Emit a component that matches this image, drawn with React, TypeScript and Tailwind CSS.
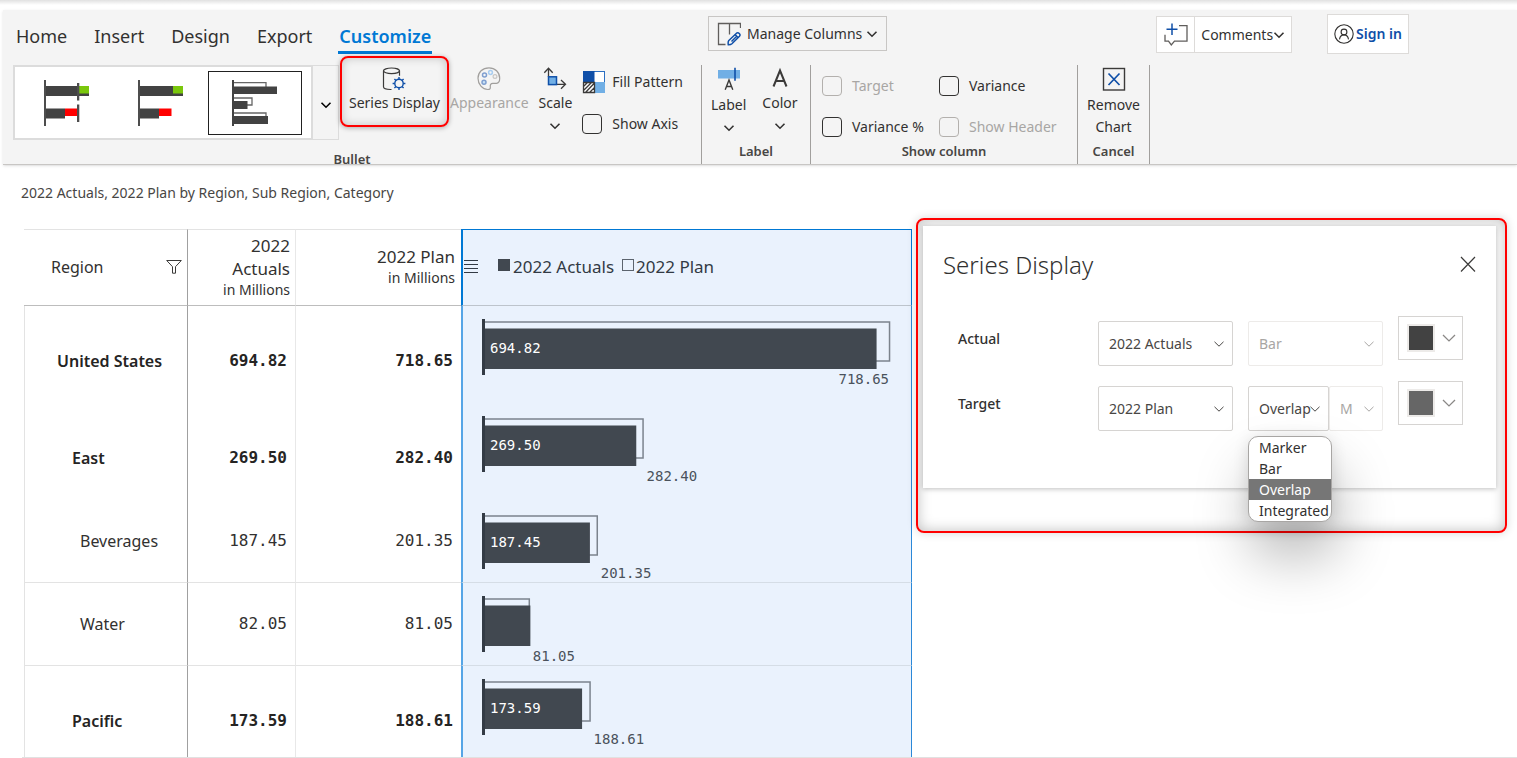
import type { ReactNode } from "react";

const INK = "#3b3a39";
const BLUE = "#0f4fa8";
const SKY = "#71afe5";

const ICON = "h-6 w-6 shrink-0";

function Chevron({ className = "h-3 w-3", thin }: { className?: string; thin?: boolean }) {
  return (
    <svg viewBox="0 0 12 12" className={className} fill="none" stroke="currentColor" strokeWidth={thin ? 1 : 1.6} aria-hidden="true">
      <path d="M1.500 3.800 6 8.200l4.500-4.400" />
    </svg>
  );
}

/* ---------- ribbon icons ---------- */

function SeriesIcon() {
  return (
    <svg viewBox="0 0 24 24" className={ICON} fill="none" stroke={INK} strokeWidth="1.200" aria-hidden="true">
      <ellipse cx="9.500" cy="3.800" rx="8" ry="2.800" />
      <path d="M1.500 3.800v16c0 1.600 3 2.700 7 2.700h1M17.500 3.800v5" />
      <g stroke={BLUE} strokeWidth="1.400">
        <circle cx="17" cy="16.500" r="4.200" />
        <path d="M17 12.300v-2.200M17 20.700v2.200M12.800 16.500h-2.200M21.200 16.500h2.200M14 13.500l-1.600-1.600M20 19.500l1.600 1.600M14 19.500l-1.600 1.600M20 13.500l1.600-1.600" />
      </g>
    </svg>
  );
}

function PaletteIcon() {
  return (
    <svg viewBox="0 0 24 24" className={ICON} fill="none" stroke="#a19f9d" strokeWidth="1.200" aria-hidden="true">
      <path d="M12 .8C5.500.8 1 5.300 1 11.300c0 6 4.500 11.200 9.800 11.200 2.200 0 2.700-1 2.500-2.500-.3-2.200.4-3.500 2.600-3.600l3.600-.1c2.200-.1 3.200-2 3.200-5C22.700 5.300 18 .8 12 .8Z" />
      <circle cx="7.500" cy="8" r="2" stroke="#7f9fd0" strokeWidth="1.500" />
      <circle cx="13.500" cy="5.500" r="1.900" stroke="#a9cdf0" strokeWidth="1.500" />
      <circle cx="18" cy="9.500" r="1.900" stroke="#c8c6c4" />
      <circle cx="7" cy="15.300" r="2" stroke="#7f9fd0" fill="#c7e0f4" strokeWidth="1.500" />
    </svg>
  );
}

function ScaleIcon() {
  return (
    <svg viewBox="0 0 24 24" className={ICON} fill="none" stroke={INK} strokeWidth="1.300" aria-hidden="true">
      <path d="M5.500 10V1.500M1.300 5.800 5.500 1.200l4.200 4.600M13.500 17.300h8.800M18 13l4.500 4.300-4.500 4.500" />
      <rect x="5.500" y="9.800" width="8" height="7.800" fill={SKY} stroke={BLUE} strokeWidth="1.500" />
    </svg>
  );
}

function PatternIcon() {
  return (
    <svg viewBox="0 0 24 24" className={ICON} aria-hidden="true">
      <rect x="1.500" y="1.500" width="21" height="21" fill="#fff" stroke="#2b6fc2" />
      <path d="M1 1h11.500v11H1z" fill={BLUE} />
      <path d="M13 12h10v11H13z" fill={SKY} />
      <path d="M1 12h12v11H1z" fill="#fff" />
      <path d="M1.500 12.500h11v10h-11zM1.500 16.500l4-4M1.500 20.500l8-8M3.500 22.500l9-9.500M7.500 22.500l5-5" fill="none" stroke={INK} strokeWidth="1.300" />
    </svg>
  );
}

function LabelIcon() {
  return (
    <svg viewBox="0 0 24 24" className={ICON} fill="none" aria-hidden="true">
      <path d="M1 3h22v8.500H1z" fill={SKY} />
      <path d="M18 .8v13" stroke={BLUE} strokeWidth="1.600" />
      <path d="M8.200 22.800 12 13l3.800 9.800M9.500 19.500h5" stroke={INK} strokeWidth="1.400" />
    </svg>
  );
}

function ColorIcon() {
  return (
    <svg viewBox="0 0 24 24" className={ICON} fill="none" stroke={INK} strokeWidth="2" aria-hidden="true">
      <path d="M5.500 19.500 12 3.500l6.500 16M8 14h8" />
    </svg>
  );
}

function RemoveIcon() {
  return (
    <svg viewBox="0 0 24 24" className={ICON} fill="none" aria-hidden="true">
      <rect x="1.500" y="1.500" width="21" height="21.500" stroke={INK} strokeWidth="1.400" />
      <path d="m6.500 6.500 11 11.500M17.500 6.500 6.500 18" stroke={BLUE} strokeWidth="1.700" />
    </svg>
  );
}

function ColumnsIcon() {
  return (
    <svg viewBox="0 0 24 24" className={ICON} fill="none" stroke="#605e5c" strokeWidth="1.300" aria-hidden="true">
      <path d="M8.500 22.500h-7v-21h22V6M12.500 1.500v11" />
      <g stroke={BLUE} strokeWidth="1.500">
        <path d="m11.800 18.500 7.700-7.300c1.800-1.500 4.600 1.200 3 3l-7.600 7.600c-1.200 1.100-3.600 1-3.600 1s-.5-3.100.5-4.300z" />
        <path d="m14.500 19.500 5.500-5.500M18 12.500l3 3" />
      </g>
    </svg>
  );
}

function CommentIcon() {
  return (
    <svg viewBox="0 0 24 24" className={ICON} fill="none" stroke="#605e5c" strokeWidth="1.300" aria-hidden="true">
      <path d="M15 2.700h8v15.500H10.500L7.300 22l-2.800-3.800H1v-6.500" />
      <path d="M8 .5V12M2.500 6.200h11" stroke={BLUE} strokeWidth="1.500" />
    </svg>
  );
}

function PersonIcon() {
  return (
    <svg viewBox="0 0 20 20" className="h-5 w-5 shrink-0" fill="none" stroke="#323130" strokeWidth="1.100" aria-hidden="true">
      <circle cx="10" cy="10" r="9.200" />
      <circle cx="10" cy="8" r="2.900" />
      <path d="M5.500 15.300c.4-2.700 2-4.400 4.500-4.400s4.100 1.700 4.500 4.400" />
    </svg>
  );
}

/* ---------- chart style gallery ---------- */

const BAR = "#424242";

function StyleVariance({ target }: { target: boolean }) {
  return (
    <svg viewBox="0 0 46 46" className="h-[46px] w-[46px]" aria-hidden="true">
      <path d="M0 0h2v46H0z" fill="#4d4d4d" />
      <path d="M2 6h43v10H2zM2 28.500h19v10H2z" fill={BAR} />
      <path d="M35 6h10v7.500H35z" fill="#7ac70c" />
      <path d="M21 28.500h12.500V36H21z" fill="#f00" />
      {target && <path d="M33 3h2.300v17.500H33zM33 24.500h2.300V42H33z" fill="#4d4d4d" />}
    </svg>
  );
}

function StyleOverlap() {
  return (
    <svg viewBox="0 0 46 46" className="h-[46px] w-[46px]" aria-hidden="true">
      <path d="M2 2.700h32V7M2 18h18v7h-5M2 33h32v4" fill="none" stroke="#666" strokeWidth="1.300" />
      <path d="M0 0h2v46H0zM2 6.500h43V14H2zM2 21h13.500v8H2zM2 36h34v8H2z" fill={BAR} />
    </svg>
  );
}

/* ---------- ribbon ---------- */

type ToolProps = { icon: ReactNode; label: ReactNode; muted?: boolean; menu?: boolean; spaced?: boolean; children?: ReactNode };

function Tool({ icon, label, muted, menu, spaced, children }: ToolProps) {
  return (
    <button
      type="button"
      disabled={muted}
      className={`relative flex flex-col items-center pt-0.5 ${muted ? "text-[#a8a6a4]" : "text-[#323130]"}`}
    >
      {icon}
      <span className={`block text-sm ${spaced ? "mt-[3px] leading-[22px]" : "mt-0.5 leading-5"}`}>{label}</span>
      {menu && <Chevron className={`h-3 w-3 ${spaced ? "mt-1.5" : "mt-[7px]"}`} />}
      {children}
    </button>
  );
}

function Check({ label, disabled }: { label: string; disabled?: boolean }) {
  return (
    <label className={`flex items-center gap-2.5 whitespace-nowrap text-sm ${disabled ? "text-[#a8a6a4]" : "text-[#323130]"}`}>
      <input
        type="checkbox"
        disabled={disabled}
        className="h-5 w-5 shrink-0 appearance-none rounded border border-[#323130] bg-transparent disabled:border-[#b3b0ad]"
      />
      {label}
    </label>
  );
}

function Group({ label, className, low, children }: { label: string; className: string; low?: boolean; children: ReactNode }) {
  return (
    <section className={`flex shrink-0 flex-col border-r border-[#a19f9d] ${className}`}>
      <div className={low ? "min-h-[84px]" : "min-h-[76px]"}>{children}</div>
      <h2 className="text-center text-[13px] leading-5 font-semibold text-[#484644]">{label}</h2>
    </section>
  );
}

function Ribbon() {
  const tabs = ["Home", "Insert", "Design", "Export"];
  return (
    <header className="ml-[3px] h-[155px] shrink-0 overflow-hidden border-b border-[#c8c6c4] bg-[#f4f4f4] shadow-sm">
      <div className="flex h-[55px]">
        <nav className="flex w-[705px] shrink-0 gap-[25px] pt-3 pl-3 text-lg leading-7 text-[#323130]">
          {tabs.map((tab) => (
            <a key={tab} href="#" className="px-px">{tab}</a>
          ))}
          <a href="#" className="h-8 border-b-[3px] border-[#0078d4] px-px font-semibold text-[#0078d4]">Customize</a>
        </nav>
        <button type="button" className="mt-1.5 flex h-[35px] items-center gap-1.5 border border-[#c8c6c4] px-2 text-sm whitespace-nowrap text-[#323130]">
          <ColumnsIcon />
          <span className="flex items-center gap-1">Manage Columns <Chevron /></span>
        </button>
        <div className="mr-[108px] ml-auto flex">
          <div className="mt-1.5 mr-[35px] flex h-[37px] border border-[#dddbd9] bg-white">
            <button type="button" aria-label="Add comment" className="flex w-[38px] items-center justify-center border-r border-[#dddbd9]">
              <CommentIcon />
            </button>
            <button type="button" className="flex items-center px-1.5 text-sm text-[#323130]">
              Comments<Chevron />
            </button>
          </div>
          <a href="#" className="mt-1 flex h-10 items-center gap-0.5 border border-[#dddbd9] bg-white px-1.5 text-sm font-semibold whitespace-nowrap text-[#0f4fa8]">
            <PersonIcon />Sign in
          </a>
        </div>
      </div>

      <div className="flex h-[99px]">
        <Group label="Bullet" className="w-[699px]" low>
          <div className="flex gap-2.5 pl-2.5">
            <div className="flex h-[75px]">
              <div className="flex items-center border-2 border-[#dcdcdc] bg-white pr-[9px] pl-[5px]">
                <button type="button" aria-label="Bullet with target" className="flex h-16 w-[94px] items-center justify-center"><StyleVariance target /></button>
                <button type="button" aria-label="Bullet variance" className="flex h-16 w-[94px] items-center justify-center"><StyleVariance target={false} /></button>
                <button type="button" aria-label="Bullet overlap" className="flex h-16 w-[94px] items-center justify-center border border-[#212121]"><StyleOverlap /></button>
              </div>
              <button type="button" aria-label="More styles" className="flex w-[26px] items-center justify-center border border-l-0 border-[#dcdcdc] pt-1">
                <Chevron />
              </button>
            </div>
            <Tool icon={<SeriesIcon />} label="Series Display">
              <span className="absolute -inset-x-[9px] -top-[9px] h-[71px] rounded-lg border-2 border-[#ff0000] shadow-[0_1px_5px_rgba(0,0,0,0.3),inset_0_0_10px_rgba(0,0,0,0.2)]" />
            </Tool>
            <Tool icon={<PaletteIcon />} label="Appearance" muted />
            <Tool icon={<ScaleIcon />} label="Scale" menu />
            <div className="flex flex-col gap-5 pt-[5px]">
              <button type="button" className="flex items-center gap-1.5 text-sm whitespace-nowrap text-[#323130]">
                <PatternIcon />Fill Pattern
              </button>
              <Check label="Show Axis" />
            </div>
          </div>
        </Group>

        <Group label="Label" className="w-[109px]">
          <div className="flex gap-4 pl-[9px]">
            <Tool icon={<LabelIcon />} label="Label" menu spaced />
            <Tool icon={<ColorIcon />} label="Color" menu />
          </div>
        </Group>

        <Group label="Show column" className="w-[267px]">
          <div className="grid grid-cols-[107px_auto] gap-x-2.5 gap-y-[21px] pt-[11px] pl-[11px]">
            <Check label="Target" disabled />
            <Check label="Variance" />
            <Check label="Variance %" />
            <Check label="Show Header" disabled />
          </div>
        </Group>

        <Group label="Cancel" className="w-[72px]">
          <div className="flex justify-center">
            <Tool icon={<RemoveIcon />} label={<>Remove<br />Chart</>} spaced />
          </div>
        </Group>
      </div>
    </header>
  );
}

/* ---------- table ---------- */

type Row = { name: string; actual: number; plan: number; level: 0 | 1 | 2; line?: boolean; tall?: boolean };

const rows: Row[] = [
  { name: "United States", actual: 694.82, plan: 718.65, level: 0, tall: true },
  { name: "East", actual: 269.5, plan: 282.4, level: 1, tall: true },
  { name: "Beverages", actual: 187.45, plan: 201.35, level: 2, line: true },
  { name: "Water", actual: 82.05, plan: 81.05, level: 2, line: true },
  { name: "Pacific", actual: 173.59, plan: 188.61, level: 1, tall: true },
];

const indent = { 0: "pl-8", 1: "pl-[47px]", 2: "pl-[55px]" };
const SCALE = 0.565;
const MONO = "font-['DejaVu_Sans_Mono',monospace]";

function BulletBar({ actual, plan }: { actual: number; plan: number }) {
  const a = actual * SCALE;
  const p = plan * SCALE;
  const atEnd = p > 380;
  return (
    <svg width="440" height="69" className={`block ${MONO}`} role="img" aria-label={`${actual.toFixed(2)} of ${plan.toFixed(2)}`}>
      <rect x="20.500" y="3" width={p} height="39" fill="none" stroke="#7b838d" strokeWidth="1.500" />
      <rect x="21" y="9.500" width={a} height="40.500" fill="#414850" />
      <rect x="19" y="0" width="3" height="56" fill="#333b45" />
      {actual > 100 && (
        <text x="27" y="34" fontSize="14" fill="#fff">{actual.toFixed(2)}</text>
      )}
      <text x={atEnd ? p + 20 : p + 24} y="65" fontSize="14" fill="#4a525c" textAnchor={atEnd ? "end" : "start"}>
        {plan.toFixed(2)}
      </text>
    </svg>
  );
}

function DataTable() {
  const head = "h-[77px] border-t border-b border-t-[#e3e3e3] border-b-[#bdbdbd] pb-0.5 font-normal";
  return (
    <table className="mt-[26px] w-[888px] shrink-0 table-fixed border-separate border-spacing-0 self-start text-[#323130]">
      <colgroup>
        <col className="w-[164px]" />
        <col className="w-[108px]" />
        <col className="w-[165px]" />
        <col className="w-[451px]" />
      </colgroup>
      <thead>
        <tr>
          <th scope="col" className={`${head} border-r border-r-[#a0a0a0] pr-[5px] pl-[27px]`}>
            <div className="flex items-center justify-between text-base">
              Region
              <svg viewBox="0 0 16 16" className="h-4 w-4" fill="none" stroke="#3b3a39" strokeWidth="1" aria-label="Filter">
                <path d="M.7 1.500h14.600L9.500 7.700v6.500h-3V7.700z" />
              </svg>
            </div>
          </th>
          <th scope="col" className={`${head} border-r border-r-[#e8e8e8] pr-[5px] pl-4 text-right text-[17px] leading-[23px]`}>
            2022 Actuals
            <span className="block text-sm leading-5">in Millions</span>
          </th>
          <th scope="col" className={`${head} pr-1.5 text-right text-[17px] leading-[23px]`}>
            2022 Plan
            <span className="block text-sm leading-5">in Millions</span>
          </th>
          <th scope="col" className="h-[77px] border border-l-2 border-[#0078d4] border-b-[#bdc4cc] bg-[#eaf2fd] pb-0.5 pl-px font-normal">
            <div className="flex items-center text-[17px] text-[#323a44]">
              <svg viewBox="0 0 14 14" className="mr-5 mb-0.5 h-3.5 w-3.5" stroke="#323a44" aria-label="Column menu">
                <path d="M0 1.500h14M0 5.500h14M0 9.500h14M0 13.500h14" />
              </svg>
              <span className="mr-[3px] mb-1 h-3 w-3 bg-[#414850]" />
              2022 Actuals
              <span className="mr-0.5 mb-1 ml-2 h-3 w-3 border border-[#5c646e]" />
              2022 Plan
            </div>
          </th>
        </tr>
      </thead>
      <tbody>
        {rows.map((row) => {
          const cell = `${row.line ? "h-[83px] border-b border-b-[#e3e3e3]" : "h-[97px]"} ${row.tall ? "pt-3" : "pt-0"} ${row.level < 2 ? "font-semibold text-[#252423]" : "font-normal"}`;
          const num = `${cell} text-right text-base ${MONO}`;
          return (
            <tr key={row.name}>
              <th scope="row" className={`${cell} ${indent[row.level]} border-r border-l border-r-[#a0a0a0] border-l-[#e3e3e3] text-left text-base`}>
                {row.name}
              </th>
              <td className={`${num} border-r border-r-[#e8e8e8] pr-2`}>{row.actual.toFixed(2)}</td>
              <td className={`${num} pr-2`}>{row.plan.toFixed(2)}</td>
              <td className={`border-r border-l-2 border-r-[#2b88d8] border-l-[#56a5e6] bg-[#eaf2fd] pt-[13px] align-top ${row.line ? "h-[83px] border-b border-b-[#d5dde6]" : "h-[97px]"}`}>
                <BulletBar actual={row.actual} plan={row.plan} />
              </td>
            </tr>
          );
        })}
      </tbody>
    </table>
  );
}

/* ---------- series panel ---------- */

type PickerProps = { label: string; value: string; options: string[]; disabled?: boolean; className?: string };

function Picker({ label, value, options, disabled, className = "" }: PickerProps) {
  return (
    <div className={`relative h-[45px] ${disabled ? "text-[#a8a6a4]" : "text-[#484644]"} ${className}`}>
      <select
        aria-label={label}
        defaultValue={value}
        disabled={disabled}
        className={`h-full w-full appearance-none rounded-xs border bg-white pl-2.5 text-sm opacity-100 ${disabled ? "border-[#edebe9]" : "border-[#d6d4d2]"}`}
      >
        {options.map((o) => (
          <option key={o}>{o}</option>
        ))}
      </select>
      <Chevron thin className="pointer-events-none absolute top-[17px] right-2 h-3 w-3" />
    </div>
  );
}

function ColorPicker({ label, swatch }: { label: string; swatch: string }) {
  return (
    <button type="button" aria-label={label} className="-mt-[5px] flex h-11 items-center gap-1.5 border border-[#d6d4d2] bg-white pl-2 text-[#8a8886]">
      <span className={`h-7 w-7 border-2 border-[#edebe9] ${swatch}`} />
      <Chevron thin className="h-4 w-4" />
    </button>
  );
}

function SeriesPanel() {
  const kinds = ["Marker", "Bar", "Overlap", "Integrated"];
  const measures = ["2022 Actuals", "2022 Plan"];
  return (
    <aside className="mt-[15px] mr-2.5 ml-1 h-[315px] flex-1 self-start rounded-lg border-2 border-[#ff0000] px-[5px] pt-1.5 shadow-[0_0_10px_rgba(0,0,0,0.16),inset_0_0_14px_rgba(0,0,0,0.25)]">
      <div role="dialog" aria-label="Series Display" className="mr-1 h-[262px] bg-white pr-[18px] pl-5 shadow-[0_1px_5px_rgba(0,0,0,0.25)]">
        <div className="flex items-center justify-between pt-5">
          <h1 className="text-2xl leading-[38px] font-light text-[#323130]">Series Display</h1>
          <button type="button" aria-label="Close" className="pb-0.5 text-[#3b3a39]">
            <svg viewBox="0 0 20 20" className="h-5 w-5" fill="none" stroke="currentColor" strokeWidth="1.200" aria-hidden="true">
              <path d="m3 3 14 14.500M17 3 3 17.500" />
            </svg>
          </button>
        </div>
        <div className="mt-[37px] grid grid-cols-[125px_135px_135px_65px] items-start gap-x-[15px] gap-y-5 pl-[15px]">
          <span className="pt-2 text-sm font-medium text-[#323130]">Actual</span>
          <Picker label="Actual measure" value="2022 Actuals" options={measures} />
          <Picker label="Actual display" value="Bar" options={["Bar"]} disabled />
          <ColorPicker label="Actual color" swatch="bg-[#424242]" />

          <span className="pt-2 text-sm font-medium text-[#323130]">Target</span>
          <Picker label="Target measure" value="2022 Plan" options={measures} />
          <div className="relative flex">
            <Picker label="Target display" value="Overlap" options={kinds} className="w-[81px]" />
            <Picker label="Marker type" value="M" options={["M"]} className="w-[54px]" disabled />
            <ul
              role="listbox"
              aria-label="Target display options"
              className="absolute top-[50px] left-0 z-10 w-[84px] overflow-hidden rounded-[10px] border border-[#a8a6a4] bg-white text-sm leading-[21px] text-[#323130] shadow-[4px_34px_56px_0_rgba(0,0,0,0.28),0_2px_16px_rgba(0,0,0,0.12)]"
            >
              {kinds.map((k) => (
                <li key={k} role="option" aria-selected={k === "Overlap"} className="pl-2.5 aria-selected:bg-[#767676] aria-selected:text-white">
                  {k}
                </li>
              ))}
            </ul>
          </div>
          <ColorPicker label="Target color" swatch="bg-[#666666]" />
        </div>
      </div>
    </aside>
  );
}

export default function App() {
  return (
    <div className="flex h-screen flex-col overflow-hidden bg-white font-['Noto_Sans','Open_Sans',sans-serif]">
      <div className="h-[5px] shrink-0 bg-linear-to-b from-[#e1e1e1] to-white" />
      <div className="h-[5px] shrink-0" />
      <Ribbon />
      <p className="mt-[18px] ml-[21px] shrink-0 text-sm leading-5 text-[#484644]">2022 Actuals, 2022 Plan by Region, Sub Region, Category</p>
      <main className="ml-[22px] flex min-h-0 flex-1 overflow-hidden border-b border-[#e1e1e1] pl-0.5">
        <DataTable />
        <SeriesPanel />
      </main>
    </div>
  );
}
